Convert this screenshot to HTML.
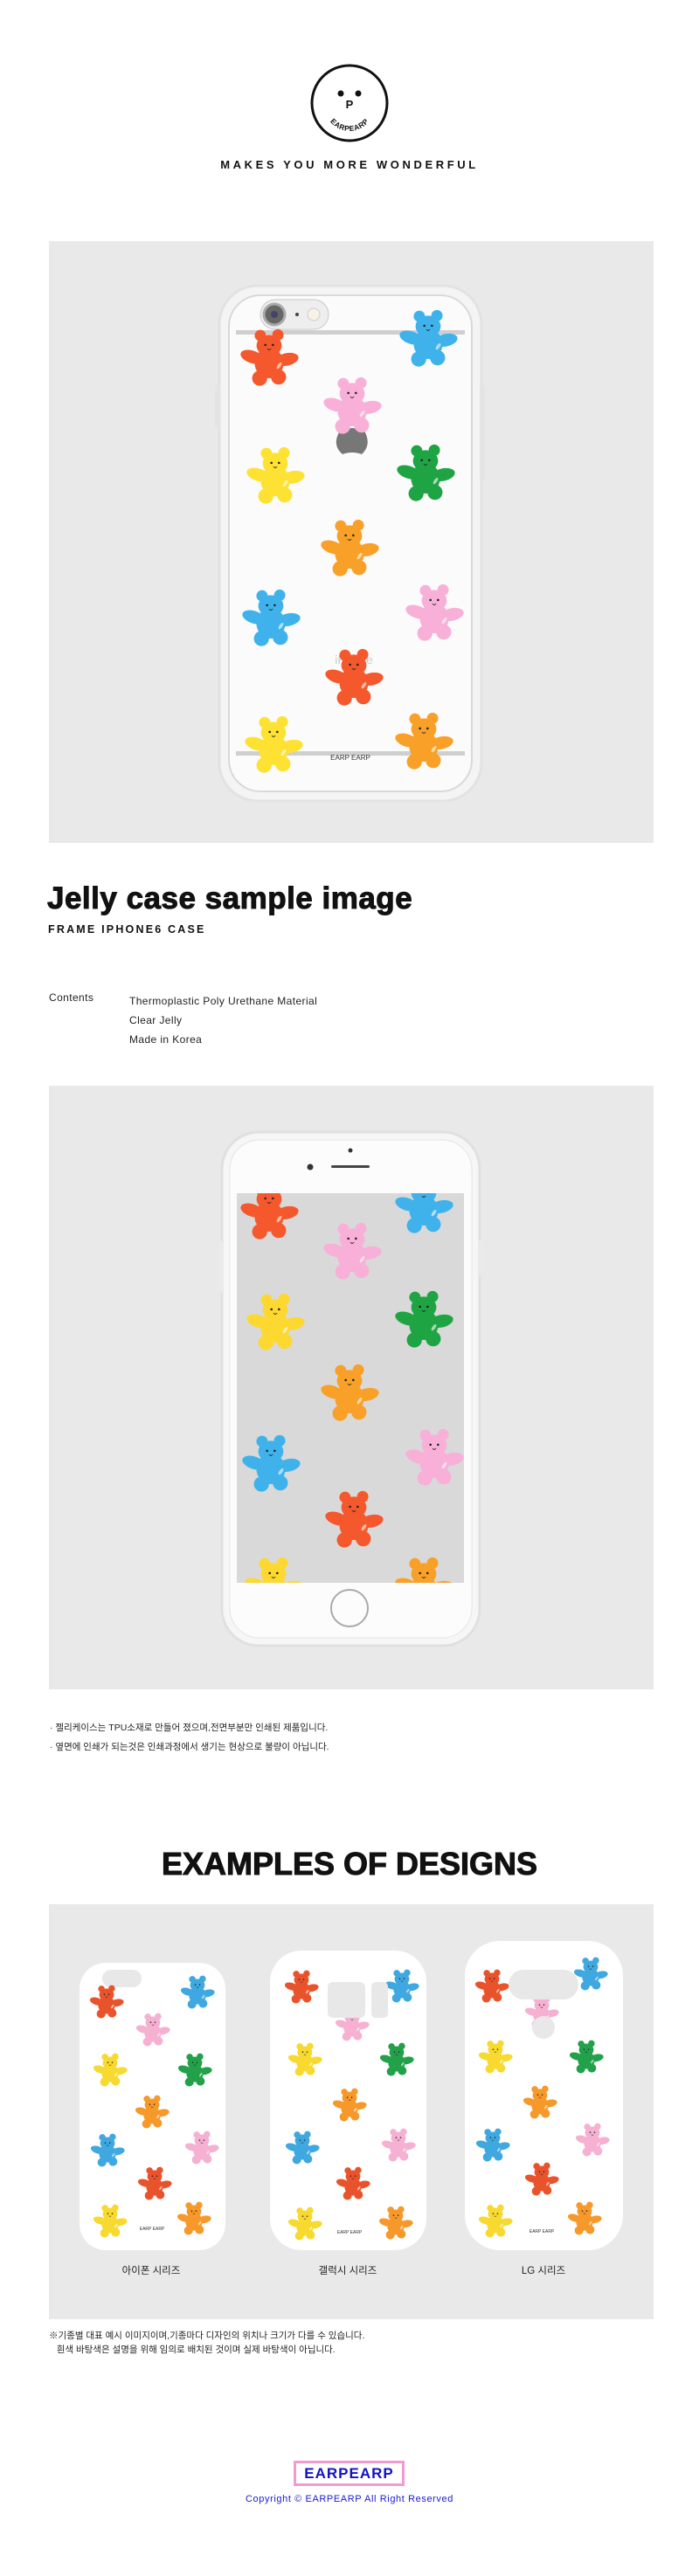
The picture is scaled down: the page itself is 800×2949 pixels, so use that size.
<!DOCTYPE html>
<html><head><meta charset="utf-8">
<style>
*{margin:0;padding:0;box-sizing:border-box}
body{width:800px;height:2949px;background:#fff;position:relative;overflow:hidden;font-family:"Liberation Sans","Noto Sans CJK KR",sans-serif;color:#111}
.a{position:absolute;white-space:nowrap}
.gray{position:absolute;left:56px;width:692px;background:#e9e9e9}
svg.main{position:absolute;left:0;top:0}
</style></head><body>
<div class="gray" style="top:276px;height:689px"></div>
<div class="gray" style="top:1243px;height:691px"></div>
<div class="gray" style="top:2180px;height:475px"></div>

<svg class="main" width="800" height="2949" viewBox="0 0 800 2949">
<defs>
<symbol id="b" viewBox="-50 -50 100 100">
<circle cx="-14" cy="-36" r="9"/><circle cx="14" cy="-37" r="9"/>
<ellipse cx="0" cy="-20" rx="20" ry="17"/>
<ellipse cx="0" cy="8" rx="23" ry="24"/>
<ellipse cx="-27" cy="-2" rx="19" ry="10" transform="rotate(18 -27 -2)"/>
<ellipse cx="28" cy="2" rx="19" ry="10" transform="rotate(-12 28 2)"/>
<ellipse cx="-15" cy="32" rx="12" ry="12"/><ellipse cx="15" cy="30" rx="12" ry="12"/>
<circle cx="-6" cy="-21" r="1.8" fill="#222"/><circle cx="6" cy="-21" r="1.8" fill="#222"/>
<path d="M-3 -15 L0 -13 L3 -15" stroke="#222" stroke-width="1.2" fill="none"/>
<ellipse cx="16" cy="12" rx="2.5" ry="6" transform="rotate(35 16 12)" fill="#fff" opacity=".6"/>
</symbol>
<clipPath id="scr"><rect x="271" y="1366" width="260" height="446"/></clipPath>
</defs>

<!-- logo -->
<circle cx="400" cy="118" r="43" fill="none" stroke="#111" stroke-width="3"/>
<circle cx="390" cy="107" r="3.5" fill="#111"/><circle cx="410" cy="107" r="3.5" fill="#111"/>
<text x="400" y="124" text-anchor="middle" font-family="Liberation Sans" font-weight="bold" font-size="13" fill="#111">P</text>
<path id="arc" d="M372 122 A28 28 0 0 0 428 122" fill="none"/>
<text font-family="Liberation Sans" font-weight="bold" font-size="8.5" fill="#111" letter-spacing="0.5"><textPath href="#arc" startOffset="50%" text-anchor="middle">EARPEARP</textPath></text>

<!-- phone 1 -->
<rect x="251" y="327" width="300" height="590" rx="44" fill="#f4f4f4" stroke="#e2e2e2" stroke-width="3"/>
<rect x="262" y="338" width="278" height="568" rx="36" fill="#fbfbfb" stroke="#d9d9d9" stroke-width="2"/>
<rect x="270" y="378" width="262" height="5" fill="#cfcfcf"/>
<rect x="270" y="860" width="262" height="5" fill="#cfcfcf"/>
<rect x="298" y="343" width="78" height="34" rx="17" fill="#eee" stroke="#c9c9c9"/>
<circle cx="314" cy="360" r="12" fill="#666" stroke="#aaa" stroke-width="3"/><circle cx="314" cy="360" r="4" fill="#446"/>
<circle cx="340" cy="360" r="2" fill="#444"/><circle cx="359" cy="360" r="7" fill="#f7f1e8" stroke="#ccc"/>
<rect x="246" y="440" width="6" height="50" rx="3" fill="#e4e4e4"/>
<rect x="549" y="440" width="6" height="110" rx="3" fill="#e4e4e4"/>
<path d="M388 495 Q403 485 418 495 Q425 510 414 520 Q403 516 392 520 Q380 510 388 495Z" fill="#777"/>
<text x="401" y="870" text-anchor="middle" font-family="Liberation Sans" font-size="8" fill="#333">EARP EARP</text>
<text x="405" y="760" text-anchor="middle" font-family="Liberation Sans" font-size="14" fill="#ccc">iPhone</text>
<g>
<use href="#b" x="272" y="374" width="72" height="72" fill="#f4582c"/>
<use href="#b" x="454" y="352" width="72" height="72" fill="#3fb2ec"/>
<use href="#b" x="367" y="429" width="72" height="72" fill="#f8b0d8"/>
<use href="#b" x="279" y="509" width="72" height="72" fill="#fde234"/>
<use href="#b" x="451" y="506" width="72" height="72" fill="#1fa444"/>
<use href="#b" x="364" y="592" width="72" height="72" fill="#f9a028"/>
<use href="#b" x="274" y="672" width="72" height="72" fill="#3fb2ec"/>
<use href="#b" x="461" y="666" width="72" height="72" fill="#f8b0d8"/>
<use href="#b" x="369" y="740" width="72" height="72" fill="#f4582c"/>
<use href="#b" x="277" y="817" width="72" height="72" fill="#fde234"/>
<use href="#b" x="449" y="813" width="72" height="72" fill="#f9a028"/>
</g>

<!-- phone 2 -->
<rect x="254" y="1296" width="295" height="588" rx="42" fill="#f6f6f6" stroke="#e0e0e0" stroke-width="3"/>
<rect x="263" y="1305" width="277" height="570" rx="34" fill="#fcfcfc" stroke="#e4e4e4"/>
<rect x="271" y="1366" width="260" height="446" fill="#d9d9d9"/>
<circle cx="401" cy="1317" r="2.5" fill="#333"/><circle cx="355" cy="1336" r="3.5" fill="#333"/>
<rect x="379" y="1334" width="44" height="3" rx="1.5" fill="#444"/>
<circle cx="400" cy="1841" r="21" fill="none" stroke="#aaa" stroke-width="2"/>
<rect x="249" y="1420" width="6" height="60" rx="3" fill="#eaeaea"/>
<rect x="547" y="1420" width="6" height="40" rx="3" fill="#eaeaea"/>
<g clip-path="url(#scr)">
<use href="#b" x="272" y="1351" width="72" height="72" fill="#f4582c"/>
<use href="#b" x="367" y="1397" width="72" height="72" fill="#f8b0d8"/>
<use href="#b" x="449" y="1344" width="72" height="72" fill="#3fb2ec"/>
<use href="#b" x="279" y="1478" width="72" height="72" fill="#fdd830"/>
<use href="#b" x="449" y="1475" width="72" height="72" fill="#1fa444"/>
<use href="#b" x="364" y="1559" width="72" height="72" fill="#f9a028"/>
<use href="#b" x="274" y="1640" width="72" height="72" fill="#3fb2ec"/>
<use href="#b" x="461" y="1633" width="72" height="72" fill="#f8b0d8"/>
<use href="#b" x="369" y="1704" width="72" height="72" fill="#f4582c"/>
<use href="#b" x="277" y="1780" width="72" height="72" fill="#fdd830"/>
<use href="#b" x="449" y="1780" width="72" height="72" fill="#f9a028"/>
</g>

<!-- examples -->
<rect x="91" y="2247" width="167" height="329" rx="30" fill="#fff"/>
<rect x="117" y="2255" width="45" height="20" rx="10" fill="#e8e8e8"/>
<rect x="309" y="2233" width="179" height="343" rx="36" fill="#fff"/>
<rect x="532" y="2222" width="181" height="354" rx="40" fill="#fff"/>
<g>
<use href="#b" x="101" y="2271" width="42" height="42" fill="#e9532c"/>
<use href="#b" x="205" y="2260" width="42" height="42" fill="#3fa8e0"/>
<use href="#b" x="154" y="2303" width="42" height="42" fill="#f5b0d2"/>
<use href="#b" x="105" y="2349" width="42" height="42" fill="#f7d930"/>
<use href="#b" x="202" y="2349" width="42" height="42" fill="#22a04a"/>
<use href="#b" x="153" y="2397" width="42" height="42" fill="#f6982a"/>
<use href="#b" x="102" y="2441" width="42" height="42" fill="#3fa8e0"/>
<use href="#b" x="210" y="2438" width="42" height="42" fill="#f5b0d2"/>
<use href="#b" x="156" y="2479" width="42" height="42" fill="#e9532c"/>
<use href="#b" x="105" y="2522" width="42" height="42" fill="#f7d930"/>
<use href="#b" x="201" y="2519" width="42" height="42" fill="#f6982a"/>

<use href="#b" x="324" y="2254" width="42" height="42" fill="#e9532c"/>
<use href="#b" x="439" y="2253" width="42" height="42" fill="#3fa8e0"/>
<use href="#b" x="382" y="2297" width="42" height="42" fill="#f5b0d2"/>
<use href="#b" x="328" y="2337" width="42" height="42" fill="#f7d930"/>
<use href="#b" x="433" y="2337" width="42" height="42" fill="#22a04a"/>
<use href="#b" x="379" y="2389" width="42" height="42" fill="#f6982a"/>
<use href="#b" x="325" y="2438" width="42" height="42" fill="#3fa8e0"/>
<use href="#b" x="435" y="2435" width="42" height="42" fill="#f5b0d2"/>
<use href="#b" x="383" y="2479" width="42" height="42" fill="#e9532c"/>
<use href="#b" x="328" y="2525" width="42" height="42" fill="#f7d930"/>
<use href="#b" x="432" y="2524" width="42" height="42" fill="#f6982a"/>

<use href="#b" x="542" y="2253" width="42" height="42" fill="#e9532c"/>
<use href="#b" x="655" y="2239" width="42" height="42" fill="#3fa8e0"/>
<use href="#b" x="599" y="2283" width="42" height="42" fill="#f5b0d2"/>
<use href="#b" x="546" y="2334" width="42" height="42" fill="#f7d930"/>
<use href="#b" x="650" y="2334" width="42" height="42" fill="#22a04a"/>
<use href="#b" x="597" y="2386" width="42" height="42" fill="#f6982a"/>
<use href="#b" x="543" y="2435" width="42" height="42" fill="#3fa8e0"/>
<use href="#b" x="657" y="2429" width="42" height="42" fill="#f5b0d2"/>
<use href="#b" x="599" y="2474" width="42" height="42" fill="#e9532c"/>
<use href="#b" x="546" y="2522" width="42" height="42" fill="#f7d930"/>
<use href="#b" x="648" y="2519" width="42" height="42" fill="#f6982a"/>
</g>
<rect x="375" y="2269" width="43" height="41" rx="6" fill="#e8e8e8"/>
<rect x="425" y="2269" width="19" height="41" rx="5" fill="#e8e8e8"/>
<rect x="582" y="2255" width="80" height="34" rx="17" fill="#e8e8e8"/>
<circle cx="622" cy="2321" r="13" fill="#e8e8e8"/>
<text x="174" y="2553" text-anchor="middle" font-family="Liberation Sans" font-size="5" fill="#333">EARP EARP</text>
<text x="400" y="2557" text-anchor="middle" font-family="Liberation Sans" font-size="5" fill="#333">EARP EARP</text>
<text x="620" y="2556" text-anchor="middle" font-family="Liberation Sans" font-size="5" fill="#333">EARP EARP</text>
</svg>

<div class="a" style="left:0;width:800px;top:181px;text-align:center;font-weight:bold;font-size:13px;letter-spacing:3.6px">MAKES YOU MORE WONDERFUL</div>

<div class="a" style="left:54px;top:1009px;font-weight:900;font-size:35px;letter-spacing:0.5px;font-family:'Liberation Sans',sans-serif;-webkit-text-stroke:1px #111">Jelly case sample image</div>
<div class="a" style="left:55px;top:1057px;font-weight:bold;font-size:12.5px;letter-spacing:2.2px">FRAME IPHONE6 CASE</div>
<div class="a" style="left:56px;top:1135px;font-size:12px;letter-spacing:.4px;color:#222">Contents</div>
<div class="a" style="left:148px;top:1135px;font-size:12px;letter-spacing:.4px;line-height:22px;color:#222">Thermoplastic Poly Urethane Material<br>Clear Jelly<br>Made in Korea</div>

<div class="a" style="left:57px;top:1967px;font-size:10.5px;line-height:22px;color:#222">· 젤리케이스는 TPU소재로 만들어 졌으며,전면부분만 인쇄된 제품입니다.<br>· 옆면에 인쇄가 되는것은 인쇄과정에서 생기는 현상으로 불량이 아닙니다.</div>

<div class="a" style="left:0;width:800px;top:2113px;text-align:center;font-weight:900;font-size:36px;-webkit-text-stroke:1px #111">EXAMPLES OF DESIGNS</div>

<div class="a" style="left:123px;width:100px;top:2591px;text-align:center;font-size:11.5px;color:#222">아이폰 시리즈</div>
<div class="a" style="left:348px;width:100px;top:2591px;text-align:center;font-size:11.5px;color:#222">갤럭시 시리즈</div>
<div class="a" style="left:572px;width:100px;top:2591px;text-align:center;font-size:11.5px;color:#222">LG 시리즈</div>

<div class="a" style="left:56px;top:2666px;font-size:10.5px;line-height:16px;color:#222">※기종별 대표 예시 이미지이며,기종마다 디자인의 위치나 크기가 다를 수 있습니다.<br>&nbsp;&nbsp;&nbsp;흰색 바탕색은 설명을 위해 임의로 배치된 것이며 실제 바탕색이 아닙니다.</div>

<div class="a" style="left:336px;top:2817px;width:127px;height:29px;border:3px solid #f49ad0;text-align:center;font-weight:900;font-size:17px;line-height:23px;letter-spacing:1px;color:#1212c4">EARPEARP</div>
<div class="a" style="left:0;width:800px;top:2855px;text-align:center;font-size:11px;letter-spacing:.6px;color:#1a1ad0">Copyright © EARPEARP All Right Reserved</div>
</body></html>
